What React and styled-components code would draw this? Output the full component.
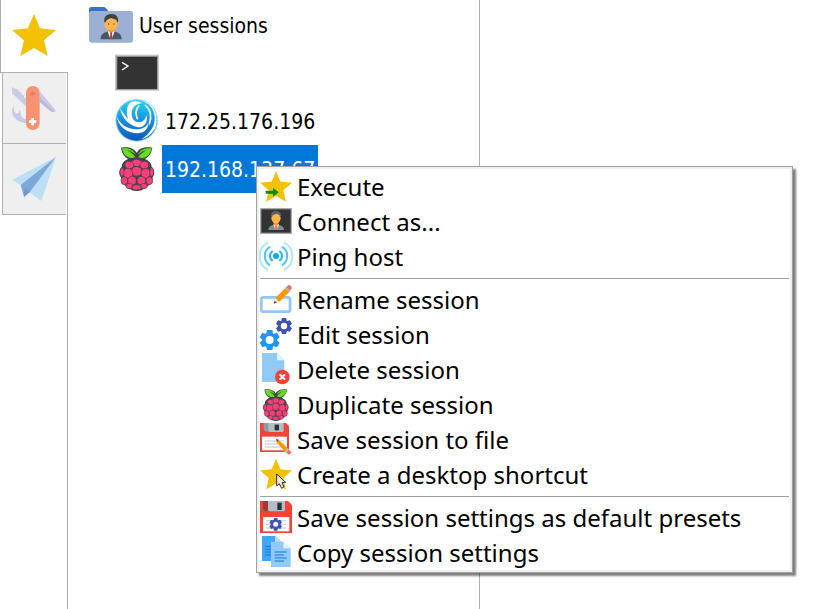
import React from "react";
import styled, { createGlobalStyle } from "styled-components";

const GlobalStyle = createGlobalStyle`
  * {
    box-sizing: border-box;
  }
  body {
    margin: 0;
    background: #ffffff;
    color: #000000;
  }
  button {
    border: 0;
    background: none;
    color: inherit;
    text-align: left;
  }
`;

const Window = styled.div`
  position: relative;
  display: flex;
  min-height: 100vh;
  overflow: hidden;
`;

const Svg = styled.svg`
  display: block;
  flex: none;
  width: ${(props) => props.$size}px;
  height: ${(props) => props.$size}px;
  overflow: visible;
`;

/* sidebar */

const Sidebar = styled.nav`
  display: flex;
  flex-direction: column;
  width: 68px;
  flex: none;
`;

const ActiveTab = styled.button`
  display: flex;
  align-items: center;
  height: 72px;
  padding: 0 11px;
  border-left: 1px solid #b0b0b0;
`;

const TabList = styled.div`
  flex: 1;
  border-top: 1px solid #b0b0b0;
  border-right: 1px solid #b0b0b0;
  padding: 0 1px 0 2px;
`;

const Tab = styled.button`
  display: flex;
  align-items: center;
  width: 100%;
  height: 71px;
  padding: 0 9px;
  background: #efefef;
  border-left: 1px solid #b0b0b0;
  border-bottom: 1px solid #b0b0b0;
`;

/* session tree */

const Tree = styled.ul`
  list-style: none;
  width: 412px;
  flex: none;
  margin: 0;
  padding: 1px 0 0 21px;
  border-right: 1px solid #b0b0b0;
  font-family: "DejaVu Sans Condensed", "DejaVu Sans", sans-serif;
  font-size: 21px;
`;

const SubTree = styled.ul`
  list-style: none;
  margin: 0;
  padding: 0 0 0 26px;
`;

const TreeRow = styled.button`
  display: flex;
  align-items: center;
  gap: 3px;
  height: 48px;
  padding: 0;
  font: inherit;
`;

const TreeLabel = styled.span`
  line-height: 46px;
  padding: 2px 3px 0;
  white-space: nowrap;
  background: ${(props) => (props.$selected ? "#0078d7" : "transparent")};
  color: ${(props) => (props.$selected ? "#ffffff" : "#000000")};
`;

/* context menu */

const Menu = styled.div`
  position: absolute;
  top: 166px;
  left: 256px;
  width: 537px;
  padding: 2px 3px;
  border: 1px solid #a0a0a0;
  outline: 2px solid #f0f0f0;
  outline-offset: -3px;
  background: #ffffff;
  box-shadow: 3px 3px 2px rgba(0, 0, 0, 0.5);
  font-family: "Noto Sans", "Open Sans", sans-serif;
  font-size: 24px;
`;

const MenuItem = styled.button`
  display: flex;
  align-items: flex-start;
  gap: 5px;
  width: 100%;
  height: 35px;
  padding: 2px 0 0;
  font: inherit;
  line-height: 32px;
  white-space: nowrap;
`;

const Separator = styled.hr`
  height: 1px;
  margin: 4px 0 3px;
  border: 0;
  background: #a0a0a0;
`;

/* icons */

const StarShape = () => (
  <polygon
    fill="#f2c100"
    points="102,42 120,85 168,90 132,121 143,168 102,144 61,168 72,121 36,90 84,85"
  />
);

const StarIcon = () => (
  <Svg $size={44} viewBox="36 42 132 132">
    <StarShape />
  </Svg>
);

const KnifeIcon = () => (
  <Svg $size={44} viewBox="36 255 132 132">
    <path
      fill="#c8cae6"
      d="M36 258l12 7 5-1 3 7 6 2 3 7 6 3 2 7 8 7v22L36 277zM119 271l47 55v7l-12-1-35-29z"
    />
    <path fill="#b9bce0" d="M119 288l44 44-9 0-35-29z" />
    <path
      fill="#c8cae6"
      d="M43 315c-8 6-9 16-6 24 6 15 21 26 42 27v-12c-9-1-17-6-17-14 0-6-2-9-5-13v8l-8 3-6-7c-2-5-2-10 0-16z"
    />
    <rect x="78" y="255" width="41" height="132" rx="20" fill="#f79273" />
    <path fill="#e17e67" d="M91 283v-6l7-7 7 7v6z" />
    <path fill="#fff" d="M94 351h8v7h7v8h-7v7h-8v-7h-7v-8h7z" />
  </Svg>
);

const PlaneIcon = () => (
  <Svg $size={44} viewBox="36 471 132 132">
    <path fill="#bedef5" d="M168 471L36 539l27 17z" />
    <path fill="#bedef5" d="M168 471l-44 132-36-26z" />
    <path fill="#7fa8da" d="M168 471L62 555l10 36 18-16z" />
    <path fill="#6f9ad0" d="M73 563l-1 28 18-16z" />
  </Svg>
);

const FolderIcon = () => (
  <Svg $size={44} viewBox="27 9 132 132">
    <path fill="#3671cb" d="M27 28q0-7 7-7h36q5 0 8 4l8 9v20H27z" />
    <rect x="27" y="33" width="132" height="95" rx="8" fill="#9bb0d2" />
    <path fill="#455a64" d="M62 118c0-16 9-19 22-24h19c14 5 22 9 22 24z" />
    <path fill="#fff" d="M83 93h21l-9 25h-4z" />
    <path fill="#ff9800" d="M84 83h19v10l-10 6-9-6z" />
    <path fill="#d32f2f" d="M90 97h7l-1 5 2 16h-9l2-16z" />
    <path fill="#ffb74d" d="M74 63q0-13 20-13t19 13v8q0 20-19 20T74 71z" />
    <path
      fill="#424242"
      d="M73 67c-2-16 5-24 19-25 16-1 25 9 22 25l-4-1v-6l-17-6-13 6-3 7z"
    />
    <circle cx="86" cy="72" r="2" fill="#784719" />
    <circle cx="102" cy="72" r="2" fill="#784719" />
  </Svg>
);

const TerminalIcon = () => (
  <Svg $size={44} viewBox="105 153 132 132">
    <rect x="105" y="164" width="132" height="108" fill="#c6c6c6" />
    <rect x="109" y="168" width="124" height="101" fill="#8e8e8e" />
    <rect x="112" y="171" width="119" height="96" fill="#333" />
    <path fill="none" stroke="#fff" strokeWidth="4" d="M126 187l18 11-18 12" />
  </Svg>
);

const SwirlIcon = () => (
  <Svg $size={44} viewBox="15 15 132 132">
    <defs>
      <linearGradient id="swirl" gradientUnits="userSpaceOnUse" x1="80" y1="16" x2="80" y2="142">
        <stop offset="0" stopColor="#20d8f5" />
        <stop offset="0.5" stopColor="#1a90df" />
        <stop offset="1" stopColor="#0a55b8" />
      </linearGradient>
    </defs>
    <circle cx="80" cy="79" r="64" fill="#9fd0ea" />
    <circle cx="80" cy="79" r="61" fill="url(#swirl)" />
    <path
      fill="#fff"
      d="M20 66C28 88 48 104 76 106C96 106 108 100 114 88C116 104 104 116 84 118C52 118 24 98 20 66z"
    />
    <path
      fill="#fff"
      d="M30 42C36 70 54 94 84 100C104 100 114 84 110 62C106 78 96 86 84 84C70 82 62 68 66 50C70 36 82 28 98 28C84 20 68 20 58 28C50 40 48 56 54 74C44 64 38 54 30 42z"
    />
    <path
      fill="#fff"
      d="M92 22C116 24 132 44 134 68C136 96 120 118 94 136C124 126 142 104 140 74C138 44 118 20 92 22z"
    />
    <path
      fill="none"
      stroke="#fff"
      strokeWidth="5"
      strokeLinecap="round"
      d="M86 36C78 46 76 60 82 74M106 34C122 46 126 68 118 90"
    />
  </Svg>
);

const drupelets = [
  [86, 213, 15, 11],
  [64, 219, 13, 11],
  [109, 219, 13, 11],
  [86, 238, 16, 14],
  [60, 244, 14, 15],
  [113, 244, 14, 15],
  [42, 240, 6, 13],
  [131, 240, 6, 13],
  [72, 266, 13, 13],
  [100, 266, 13, 13],
  [49, 266, 10, 12],
  [124, 266, 10, 12],
  [86, 286, 13, 8],
  [64, 282, 10, 8],
  [108, 282, 10, 8],
];

const RaspberryIcon = ({ size }) => (
  <Svg $size={size} viewBox="21 165 132 132">
    <path
      fill="#424449"
      d="M60 201c-13 6-19 14-19 24-9 8-9 24-2 31 1 16 10 25 20 31 8 6 17 10 27 10s20-4 27-10c12-7 19-15 21-31 6-8 6-23-3-31 0-11-7-18-20-24 13-7 20-19 22-34-20-4-39 0-47 15-9-15-28-19-47-15 2 15 9 27 21 34z"
    />
    <path
      fill="#66dd22"
      d="M42 169c16-2 34 1 41 19-8-8-18-12-27-14 11 6 21 12 26 22-21 8-36-7-40-27zM131 169c-16-2-34 1-41 19 8-8 18-12 27-14-11 6-21 12-26 22 21 8 36-7 40-27z"
    />
    {drupelets.map(([cx, cy, rx, ry]) => (
      <ellipse
        key={`${cx}-${cy}`}
        cx={cx}
        cy={cy}
        rx={rx}
        ry={ry}
        fill="#ff3d79"
        stroke="#424449"
        strokeWidth="2"
      />
    ))}
  </Svg>
);

const ExecuteIcon = () => (
  <Svg $size={32} viewBox="24 33 96 96">
    <g transform="translate(-2 3) scale(0.727)">
      <StarShape />
    </g>
    <path fill="#078a07" d="M41 92h22v-9l17 14-17 13v-9H41z" />
  </Svg>
);

const ConnectIcon = () => (
  <Svg $size={32} viewBox="24 138 96 96">
    <rect x="24" y="144" width="96" height="78" fill="#aaa" />
    <rect x="28" y="148" width="88" height="70" fill="#333" />
    <path fill="#78909c" d="M49 210c0-10 7-13 16-16h14c10 3 17 6 17 16z" />
    <path fill="#fff" d="M64 193h17l-6 17h-5z" />
    <path fill="#ff9800" d="M65 185h14v9l-7 5-7-5z" />
    <path fill="#e57373" d="M69 198h7l2 12H67z" />
    <path fill="#ffb74d" d="M58 166q14-13 28 0v9q-2 15-14 15t-14-15z" />
    <path fill="#616161" d="M57 173c-2-13 3-20 15-20s17 7 15 20l-4-2v-5l-9-5-12 5-2 6z" />
  </Svg>
);

const PingIcon = () => (
  <Svg $size={32} viewBox="24 243 96 96">
    <circle cx="72" cy="288" r="9" fill="#03a9f4" />
    <g fill="none" strokeWidth="6">
      <path stroke="#29b6f6" d="M62 273a18 18 0 0 0 0 30M82 273a18 18 0 0 1 0 30" />
      <path stroke="#4fc3f7" d="M54 260a33 33 0 0 0 0 56M90 260a33 33 0 0 1 0 56" />
      <path stroke="#b3e5fc" d="M48 248a46 46 0 0 0 0 82M96 248a46 46 0 0 1 0 82" />
    </g>
  </Svg>
);

const RenameIcon = () => (
  <Svg $size={32} viewBox="24 27 96 96">
    <rect x="28" y="67" width="86" height="43" rx="6" fill="#fff" stroke="#90c8f9" strokeWidth="8" />
    <path fill="#ff9800" d="M70 69l33-33 12 12-34 33z" />
    <path fill="#b0bec5" d="M99 40l5-5 12 12-5 5z" />
    <path fill="#e57373" d="M103 36l6-6q4-1 7 2 5 3 3 8l-5 7z" />
    <path fill="#ffe0b2" d="M70 69l11 12-15 4z" />
    <path fill="#37474f" d="M68 77l6 6-9 3z" />
  </Svg>
);

const teeth = [0, 60, 120, 180, 240, 300];

const Gear = ({ x, y, r, color }) => (
  <g transform={`translate(${x} ${y}) scale(${r / 30})`}>
    {teeth.map((angle) => (
      <path key={angle} fill={color} d="M-8-30H8l3 14h-22z" transform={`rotate(${angle})`} />
    ))}
    <circle r="17" fill="none" stroke={color} strokeWidth="10" />
  </g>
);

const EditIcon = () => (
  <Svg $size={32} viewBox="24 132 96 96">
    <Gear x={53} y={195} r={30} color="#2196f3" />
    <Gear x={96} y={153} r={24} color="#3f51b5" />
  </Svg>
);

const DeleteIcon = () => (
  <Svg $size={32} viewBox="24 237 96 96">
    <path fill="#90caf9" d="M30 234h45l22 22v65H30z" />
    <path fill="#e1f5fe" d="M75 234l22 22H75z" />
    <circle cx="91" cy="306" r="22" fill="#f44336" />
    <path stroke="#fff" strokeWidth="6" d="M83 298l16 16M99 298l-16 16" />
  </Svg>
);

const SaveFileIcon = () => (
  <Svg $size={32} viewBox="24 132 96 96">
    <path fill="#f44336" d="M24 129h78l9 9v78H24z" />
    <path fill="#b0bec5" d="M48 129h47v22q0 5-5 5H53q-5 0-5-5z" />
    <path fill="#8b9ba3" d="M35 129h14v27q-14 0-14-9z" />
    <rect x="68" y="134" width="13" height="17" fill="#263238" />
    <rect x="30" y="170" width="75" height="41" fill="#fff" />
    <path stroke="#cfd8dc" strokeWidth="4" d="M39 183h57M39 192h57M39 201h57" />
    <path fill="#ff9800" d="M78 178l32 30-10 9-27-31z" />
    <path fill="#b0bec5" d="M107 205l5 5-10 10-5-5z" />
    <path fill="#e57373" d="M111 209l8 8-8 7-8-5z" />
    <path fill="#37474f" d="M72 177l8 2-5 6z" />
  </Svg>
);

const ShortcutIcon = () => (
  <Svg $size={32} viewBox="24 237 96 96">
    <g transform="translate(-2 206) scale(0.727)">
      <StarShape />
    </g>
    <path
      fill="#e8e8e8"
      stroke="#333"
      strokeWidth="3"
      d="M74 282v36l8-7 7 14 7-4-6-13 11-1z"
    />
  </Svg>
);

const SavePresetsIcon = () => (
  <Svg $size={32} viewBox="24 51 96 96">
    <path fill="#f44336" d="M24 48h84l12 12v84H24z" />
    <path fill="#b0bec5" d="M48 48h51v26q0 5-5 5H53q-5 0-5-5z" />
    <path fill="#9a3c38" d="M33 48h15v31q-15 0-15-10z" />
    <rect x="76" y="53" width="13" height="22" fill="#263238" />
    <rect x="33" y="96" width="79" height="43" fill="#fff" />
    <path stroke="#cfd8dc" strokeWidth="4" d="M42 107h60M42 118h60M42 129h60" />
    <circle cx="71" cy="118" r="10" fill="#fff" />
    <Gear x={71} y={118} r={19} color="#3f51b5" />
  </Svg>
);

const CopyIcon = () => (
  <Svg $size={32} viewBox="24 156 96 96">
    <path fill="#42a5f5" d="M30 153h40l18 18v57H30z" />
    <path fill="#bbdefb" d="M69 153l19 19H69z" />
    <path stroke="#1976d2" strokeWidth="3" d="M39 184h18M39 193h18M39 201h18M39 210h18" />
    <path fill="#90caf9" d="M57 170h37l22 20v56H57z" />
    <path fill="#e1f5fe" d="M94 170l22 20H94z" />
    <path stroke="#1976d2" strokeWidth="3" d="M68 201h36M68 210h28M68 219h36M68 228h28" />
  </Svg>
);

const menuGroups = [
  [
    { label: "Execute", icon: <ExecuteIcon /> },
    { label: "Connect as...", icon: <ConnectIcon /> },
    { label: "Ping host", icon: <PingIcon /> },
  ],
  [
    { label: "Rename session", icon: <RenameIcon /> },
    { label: "Edit session", icon: <EditIcon /> },
    { label: "Delete session", icon: <DeleteIcon /> },
    { label: "Duplicate session", icon: <RaspberryIcon size={32} /> },
    { label: "Save session to file", icon: <SaveFileIcon /> },
    { label: "Create a desktop shortcut", icon: <ShortcutIcon /> },
  ],
  [
    { label: "Save session settings as default presets", icon: <SavePresetsIcon /> },
    { label: "Copy session settings", icon: <CopyIcon /> },
  ],
];

function App() {
  return (
    <>
      <GlobalStyle />
      <Window>
        <Sidebar>
          <ActiveTab aria-label="Sessions">
            <StarIcon />
          </ActiveTab>
          <TabList>
            <Tab aria-label="Tools">
              <KnifeIcon />
            </Tab>
            <Tab aria-label="Macros">
              <PlaneIcon />
            </Tab>
          </TabList>
        </Sidebar>
        <Tree>
          <li>
            <TreeRow>
              <FolderIcon />
              <TreeLabel>User sessions</TreeLabel>
            </TreeRow>
            <SubTree>
              <li>
                <TreeRow aria-label="Local terminal">
                  <TerminalIcon />
                </TreeRow>
              </li>
              <li>
                <TreeRow>
                  <SwirlIcon />
                  <TreeLabel>172.25.176.196</TreeLabel>
                </TreeRow>
              </li>
              <li>
                <TreeRow>
                  <RaspberryIcon size={44} />
                  <TreeLabel $selected>192.168.137.67</TreeLabel>
                </TreeRow>
              </li>
            </SubTree>
          </li>
        </Tree>
        <Menu role="menu">
          {menuGroups.map((items, index) => (
            <React.Fragment key={index}>
              {index > 0 && <Separator />}
              {items.map((item) => (
                <MenuItem key={item.label} role="menuitem">
                  {item.icon}
                  {item.label}
                </MenuItem>
              ))}
            </React.Fragment>
          ))}
        </Menu>
      </Window>
    </>
  );
}

export default App;
